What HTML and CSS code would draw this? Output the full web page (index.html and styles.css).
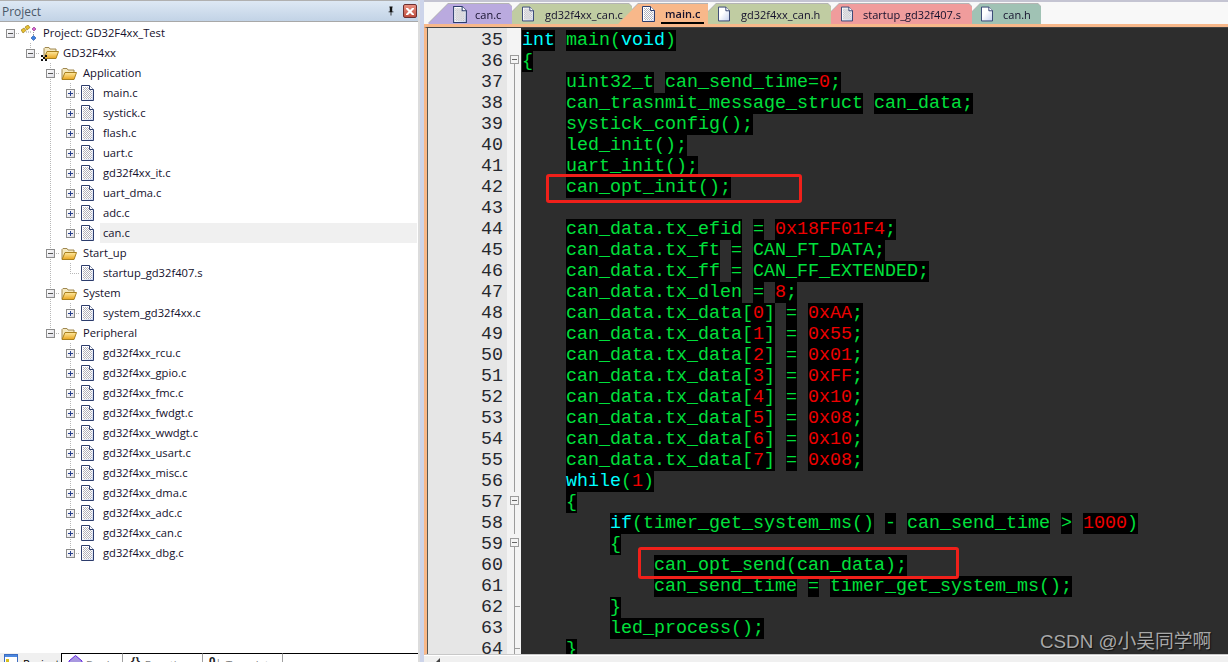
FILE: index.html
```html
<!DOCTYPE html>
<html lang="zh-CN">

<head>
    <meta charset="UTF-8">
    <title>GD32F4xx_Test</title>
    <link rel="stylesheet" href="styles.css">
</head>

<body>
    <svg class="defs" width="0" height="0">
        <defs>
            <pattern id="hatch" width="2" height="2" patternUnits="userSpaceOnUse">
                <rect width="2" height="2" fill="#fff"/>
                <rect width="1" height="1" fill="#b4b4bc"/>
                <rect x="1" y="1" width="1" height="1" fill="#b4b4bc"/>
            </pattern>
            <linearGradient id="page" x1="0" x2="1" y1="0" y2="1">
                <stop offset="0.4" stop-color="#fff"/>
                <stop offset="1" stop-color="#c4d0ee"/>
            </linearGradient>
            <linearGradient id="gold" x1="0" x2="0" y1="0" y2="1">
                <stop offset="0" stop-color="#ffe9a0"/>
                <stop offset="1" stop-color="#e8a520"/>
            </linearGradient>
            <symbol id="file-c" viewBox="0 0 13 16">
                <path d="M.5.5H8.5L12.5 4.5V15.5H.5Z" fill="url(#page)" stroke="#2c3c6c"/>
                <path d="M2 2H8V5H11V14H2Z" fill="url(#hatch)"/>
                <path d="M8.5.5V4.5H12.5" fill="#fff" stroke="#2c3c6c"/>
            </symbol>
            <symbol id="file-h" viewBox="0 0 13 16">
                <path d="M.5.5H8.5L12.5 4.5V15.5H.5Z" fill="url(#page)" stroke="#2c3c6c"/>
                <path d="M8.5.5V4.5H12.5" fill="#fff" stroke="#2c3c6c"/>
            </symbol>
            <symbol id="folder" viewBox="0 0 16 13">
                <path d="M1 12V2.5L2 1.500H6L7 3H13V6" fill="#f4e8c0" stroke="#a08850"/>
                <path d="M1 12.500L4 5.500H15.500L13 12.500Z" fill="url(#gold)" stroke="#a88020"/>
            </symbol>
            <symbol id="target" viewBox="0 0 18 16">
                <path d="M3 12V3.500L4 2.500H8L9 4H15V7" fill="#f4e8c0" stroke="#a08850"/>
                <path d="M3 13.500L6 6.500H17.500L15 13.500Z" fill="url(#gold)" stroke="#a88020"/>
                <path d="M0 10h2v2H0zM4 10h2v2H4zM2 12h2v2H2zM0 14h2v2H0zM4 14h2v2H4z" fill="#111"/>
            </symbol>
            <symbol id="project" viewBox="0 0 16 16">
                <path d="M4 2 7 0 9 2.500 6 5Z" fill="#e8c030" stroke="#907010" stroke-width=".6"/>
                <path d="M0 5 3 3 5 5.500 2 8Z" fill="#e8c030" stroke="#907010" stroke-width=".6"/>
                <path d="M11 4 13 2 15 4 13 6Z" fill="#d860d0" stroke="#803080" stroke-width=".6"/>
                <path d="M10 13 12.500 10.500 15 13 12.500 15.500Z" fill="#3c80e0" stroke="#20509a" stroke-width=".6"/>
                <path d="M5 7H11M12.500 7V10" stroke="#999" stroke-dasharray="1 1" fill="none"/>
            </symbol>
        </defs>
    </svg>

    <div class="ide">
        <aside class="side">
            <div class="side-head">
                <span class="side-title">Project</span>
                <svg class="pin" viewBox="0 0 10 11" width="8" height="10"><path d="M3 0H7V1H6.500V6H8V7H5.500V11H4.500V7H2V6H3.500V1H3Z" fill="#111"/></svg>
                <span class="close">
                    <svg viewBox="0 0 8 7" width="8" height="7"><path d="M0 0H2L4 2 6 0H8V1L5.500 3.500 8 6V7H6L4 5 2 7H0V6L2.500 3.500 0 1Z" fill="#fff"/></svg>
                </span>
            </div>

            <div class="tree">
                <div class="row"><span class="tg first"><i class="minus"></i></span><span class="ico"><svg width="16" height="16"><use href="#project"/></svg></span><span class="lbl">Project: GD32F4xx_Test</span></div>
                <div class="row"><span class="sp"></span><span class="tg last"><i class="minus"></i></span><span class="ico"><svg width="18" height="16"><use href="#target"/></svg></span><span class="lbl">GD32F4xx</span></div>

                <!-- Application -->
                <div class="row"><span class="sp"></span><span class="sp"></span><span class="tg"><i class="minus"></i></span><span class="ico"><svg width="16" height="13"><use href="#folder"/></svg></span><span class="lbl">Application</span></div>
                <div class="row"><span class="sp"></span><span class="sp"></span><span class="gd"></span><span class="tg"><i class="plus"></i></span><span class="ico"><svg width="13" height="16"><use href="#file-c"/></svg></span><span class="lbl">main.c</span></div>
                <div class="row"><span class="sp"></span><span class="sp"></span><span class="gd"></span><span class="tg"><i class="plus"></i></span><span class="ico"><svg width="13" height="16"><use href="#file-c"/></svg></span><span class="lbl">systick.c</span></div>
                <div class="row"><span class="sp"></span><span class="sp"></span><span class="gd"></span><span class="tg"><i class="plus"></i></span><span class="ico"><svg width="13" height="16"><use href="#file-c"/></svg></span><span class="lbl">flash.c</span></div>
                <div class="row"><span class="sp"></span><span class="sp"></span><span class="gd"></span><span class="tg"><i class="plus"></i></span><span class="ico"><svg width="13" height="16"><use href="#file-c"/></svg></span><span class="lbl">uart.c</span></div>
                <div class="row"><span class="sp"></span><span class="sp"></span><span class="gd"></span><span class="tg"><i class="plus"></i></span><span class="ico"><svg width="13" height="16"><use href="#file-c"/></svg></span><span class="lbl">gd32f4xx_it.c</span></div>
                <div class="row"><span class="sp"></span><span class="sp"></span><span class="gd"></span><span class="tg"><i class="plus"></i></span><span class="ico"><svg width="13" height="16"><use href="#file-c"/></svg></span><span class="lbl">uart_dma.c</span></div>
                <div class="row"><span class="sp"></span><span class="sp"></span><span class="gd"></span><span class="tg"><i class="plus"></i></span><span class="ico"><svg width="13" height="16"><use href="#file-c"/></svg></span><span class="lbl">adc.c</span></div>
                <div class="row"><span class="sp"></span><span class="sp"></span><span class="gd"></span><span class="tg last"><i class="plus"></i></span><span class="ico"><svg width="13" height="16"><use href="#file-c"/></svg></span><span class="lbl sel">can.c</span></div>

                <!-- Start_up -->
                <div class="row"><span class="sp"></span><span class="sp"></span><span class="tg"><i class="minus"></i></span><span class="ico"><svg width="16" height="13"><use href="#folder"/></svg></span><span class="lbl">Start_up</span></div>
                <div class="row"><span class="sp"></span><span class="sp"></span><span class="gd"></span><span class="tg last"></span><span class="ico"><svg width="13" height="16"><use href="#file-c"/></svg></span><span class="lbl">startup_gd32f407.s</span></div>

                <!-- System -->
                <div class="row"><span class="sp"></span><span class="sp"></span><span class="tg"><i class="minus"></i></span><span class="ico"><svg width="16" height="13"><use href="#folder"/></svg></span><span class="lbl">System</span></div>
                <div class="row"><span class="sp"></span><span class="sp"></span><span class="gd"></span><span class="tg last"><i class="plus"></i></span><span class="ico"><svg width="13" height="16"><use href="#file-c"/></svg></span><span class="lbl">system_gd32f4xx.c</span></div>

                <!-- Peripheral -->
                <div class="row"><span class="sp"></span><span class="sp"></span><span class="tg last"><i class="minus"></i></span><span class="ico"><svg width="16" height="13"><use href="#folder"/></svg></span><span class="lbl">Peripheral</span></div>
                <div class="row"><span class="sp"></span><span class="sp"></span><span class="sp"></span><span class="tg"><i class="plus"></i></span><span class="ico"><svg width="13" height="16"><use href="#file-c"/></svg></span><span class="lbl">gd32f4xx_rcu.c</span></div>
                <div class="row"><span class="sp"></span><span class="sp"></span><span class="sp"></span><span class="tg"><i class="plus"></i></span><span class="ico"><svg width="13" height="16"><use href="#file-c"/></svg></span><span class="lbl">gd32f4xx_gpio.c</span></div>
                <div class="row"><span class="sp"></span><span class="sp"></span><span class="sp"></span><span class="tg"><i class="plus"></i></span><span class="ico"><svg width="13" height="16"><use href="#file-c"/></svg></span><span class="lbl">gd32f4xx_fmc.c</span></div>
                <div class="row"><span class="sp"></span><span class="sp"></span><span class="sp"></span><span class="tg"><i class="plus"></i></span><span class="ico"><svg width="13" height="16"><use href="#file-c"/></svg></span><span class="lbl">gd32f4xx_fwdgt.c</span></div>
                <div class="row"><span class="sp"></span><span class="sp"></span><span class="sp"></span><span class="tg"><i class="plus"></i></span><span class="ico"><svg width="13" height="16"><use href="#file-c"/></svg></span><span class="lbl">gd32f4xx_wwdgt.c</span></div>
                <div class="row"><span class="sp"></span><span class="sp"></span><span class="sp"></span><span class="tg"><i class="plus"></i></span><span class="ico"><svg width="13" height="16"><use href="#file-c"/></svg></span><span class="lbl">gd32f4xx_usart.c</span></div>
                <div class="row"><span class="sp"></span><span class="sp"></span><span class="sp"></span><span class="tg"><i class="plus"></i></span><span class="ico"><svg width="13" height="16"><use href="#file-c"/></svg></span><span class="lbl">gd32f4xx_misc.c</span></div>
                <div class="row"><span class="sp"></span><span class="sp"></span><span class="sp"></span><span class="tg"><i class="plus"></i></span><span class="ico"><svg width="13" height="16"><use href="#file-c"/></svg></span><span class="lbl">gd32f4xx_dma.c</span></div>
                <div class="row"><span class="sp"></span><span class="sp"></span><span class="sp"></span><span class="tg"><i class="plus"></i></span><span class="ico"><svg width="13" height="16"><use href="#file-c"/></svg></span><span class="lbl">gd32f4xx_adc.c</span></div>
                <div class="row"><span class="sp"></span><span class="sp"></span><span class="sp"></span><span class="tg"><i class="plus"></i></span><span class="ico"><svg width="13" height="16"><use href="#file-c"/></svg></span><span class="lbl">gd32f4xx_can.c</span></div>
                <div class="row"><span class="sp"></span><span class="sp"></span><span class="sp"></span><span class="tg last"><i class="plus"></i></span><span class="ico"><svg width="13" height="16"><use href="#file-c"/></svg></span><span class="lbl">gd32f4xx_dbg.c</span></div>
            </div>

            <!-- 底部頁籤 -->
            <div class="side-tabs">
                <span class="stab stab-on">
                    <svg width="14" height="12" viewBox="0 0 14 12"><rect x=".5" y=".5" width="13" height="11" fill="#fff" stroke="#3c6cc0"/><rect x="1" y="1" width="12" height="2" fill="#4c88e0"/><rect x="2" y="5" width="3" height="3" fill="#d8c020"/></svg>
                    <span class="stab-text">Project</span>
                </span>
                <span class="stab stab-books">
                    <svg width="15" height="12" viewBox="0 0 15 12"><path d="M1 6 7.500 .5 14 6V12H1Z" fill="#a898e0" stroke="#6020e0"/></svg>
                    <span class="stab-text">Books</span>
                </span>
                <span class="stab stab-func"><b>{}</b><span class="stab-text">Functions</span></span>
                <span class="stab stab-tpl"><b>0↓</b><span class="stab-text">Templates</span></span>
                <span class="stab-rest"></span>
            </div>
        </aside>

        <div class="split"></div>

        <main class="main">
            <div class="tabbar">
                <div class="tabs">
                    <div class="tab tab-first c-purple"><svg width="14" height="17"><use href="#file-c"/></svg><span>can.c</span></div>
                    <div class="tab tab-cfile c-olive"><svg width="12" height="16"><use href="#file-c"/></svg><span>gd32f4xx_can.c</span></div>
                    <div class="tab tab-active c-orange"><svg width="13" height="16"><use href="#file-c"/></svg><span>main.c</span></div>
                    <div class="tab tab-hfile c-olive"><svg width="12" height="16"><use href="#file-h"/></svg><span>gd32f4xx_can.h</span></div>
                    <div class="tab tab-startup c-pink"><svg width="12" height="16"><use href="#file-c"/></svg><span>startup_gd32f407.s</span></div>
                    <div class="tab tab-last c-teal"><svg width="12" height="16"><use href="#file-h"/></svg><span>can.h</span></div>
                </div>
            </div>

            <div class="editor">
                <div class="line"><span class="num">35</span><span class="fold"></span><pre><b class="k">int</b> <b>main(</b><b class="k">void</b><b>)</b></pre></div>
                <div class="line"><span class="num">36</span><span class="fold fb"></span><pre><b>{</b></pre></div>
                <div class="line"><span class="num">37</span><span class="fold fl"></span><pre>    <b>uint32_t</b> <b>can_send_time=</b><b class="r">0</b><b>;</b></pre></div>
                <div class="line"><span class="num">38</span><span class="fold fl"></span><pre>    <b>can_trasnmit_message_struct</b> <b>can_data;</b></pre></div>
                <div class="line"><span class="num">39</span><span class="fold fl"></span><pre>    <b>systick_config();</b></pre></div>
                <div class="line"><span class="num">40</span><span class="fold fl"></span><pre>    <b>led_init();</b></pre></div>
                <div class="line"><span class="num">41</span><span class="fold fl"></span><pre>    <b>uart_init();</b></pre></div>
                <div class="line"><span class="num">42</span><span class="fold fl"></span><pre>    <b>can_opt_init();</b></pre></div>
                <div class="line"><span class="num">43</span><span class="fold fl"></span><pre> </pre></div>
                <div class="line"><span class="num">44</span><span class="fold fl"></span><pre>    <b>can_data.tx_efid</b> <b>=</b> <b class="r">0x18FF01F4</b><b>;</b></pre></div>
                <div class="line"><span class="num">45</span><span class="fold fl"></span><pre>    <b>can_data.tx_ft</b> <b>=</b> <b>CAN_FT_DATA;</b></pre></div>
                <div class="line"><span class="num">46</span><span class="fold fl"></span><pre>    <b>can_data.tx_ff</b> <b>=</b> <b>CAN_FF_EXTENDED;</b></pre></div>
                <div class="line"><span class="num">47</span><span class="fold fl"></span><pre>    <b>can_data.tx_dlen</b> <b>=</b> <b class="r">8</b><b>;</b></pre></div>
                <div class="line"><span class="num">48</span><span class="fold fl"></span><pre>    <b>can_data.tx_data[</b><b class="r">0</b><b>]</b> <b>=</b> <b class="r">0xAA</b><b>;</b></pre></div>
                <div class="line"><span class="num">49</span><span class="fold fl"></span><pre>    <b>can_data.tx_data[</b><b class="r">1</b><b>]</b> <b>=</b> <b class="r">0x55</b><b>;</b></pre></div>
                <div class="line"><span class="num">50</span><span class="fold fl"></span><pre>    <b>can_data.tx_data[</b><b class="r">2</b><b>]</b> <b>=</b> <b class="r">0x01</b><b>;</b></pre></div>
                <div class="line"><span class="num">51</span><span class="fold fl"></span><pre>    <b>can_data.tx_data[</b><b class="r">3</b><b>]</b> <b>=</b> <b class="r">0xFF</b><b>;</b></pre></div>
                <div class="line"><span class="num">52</span><span class="fold fl"></span><pre>    <b>can_data.tx_data[</b><b class="r">4</b><b>]</b> <b>=</b> <b class="r">0x10</b><b>;</b></pre></div>
                <div class="line"><span class="num">53</span><span class="fold fl"></span><pre>    <b>can_data.tx_data[</b><b class="r">5</b><b>]</b> <b>=</b> <b class="r">0x08</b><b>;</b></pre></div>
                <div class="line"><span class="num">54</span><span class="fold fl"></span><pre>    <b>can_data.tx_data[</b><b class="r">6</b><b>]</b> <b>=</b> <b class="r">0x10</b><b>;</b></pre></div>
                <div class="line"><span class="num">55</span><span class="fold fl"></span><pre>    <b>can_data.tx_data[</b><b class="r">7</b><b>]</b> <b>=</b> <b class="r">0x08</b><b>;</b></pre></div>
                <div class="line"><span class="num">56</span><span class="fold fl"></span><pre>    <b class="k">while</b><b>(</b><b class="r">1</b><b>)</b></pre></div>
                <div class="line"><span class="num">57</span><span class="fold fb"></span><pre>    <b>{</b></pre></div>
                <div class="line"><span class="num">58</span><span class="fold fl"></span><pre>        <b class="k">if</b><b>(timer_get_system_ms()</b> <b>-</b> <b>can_send_time</b> <b>&gt;</b> <b class="r">1000</b><b>)</b></pre></div>
                <div class="line"><span class="num">59</span><span class="fold fb"></span><pre>        <b>{</b></pre></div>
                <div class="line"><span class="num">60</span><span class="fold fl"></span><pre>            <b>can_opt_send(can_data);</b></pre></div>
                <div class="line"><span class="num">61</span><span class="fold fl"></span><pre>            <b>can_send_time</b> <b>=</b> <b>timer_get_system_ms();</b></pre></div>
                <div class="line"><span class="num">62</span><span class="fold fl ft"></span><pre>        <b>}</b></pre></div>
                <div class="line"><span class="num">63</span><span class="fold fl"></span><pre>        <b>led_process();</b></pre></div>
                <div class="line"><span class="num">64</span><span class="fold fl ft"></span><pre>    <b>}</b></pre></div>
            </div>

            <div class="hscroll"><span class="arrow-left"></span></div>
        </main>

        <!-- 紅框標記 -->
        <div class="mark mark-init"></div>
        <div class="mark mark-send"></div>
        <div class="watermark">CSDN @小吴同学啊</div>
    </div>
</body>

</html>
```

FILE: styles.css
```css
/* 主要樣式設定區塊 */
body {
    margin: 0;
    overflow: hidden;
    background-color: #f0f0f0;
}

.defs {
    position: absolute;
}

.ide {
    position: relative;
    display: flex;
    height: 662px;
    overflow: hidden;
    font-family: "Open Sans", "Liberation Sans", sans-serif;
    font-size: 11.2px;
    color: #14102c;
}

/* 左側專案面板 */
.side {
    display: flex;
    flex-direction: column;
    width: 418px;
    border-right: 2px solid #dcdcdc;
    background-color: #fff;
}

.side-head {
    display: flex;
    align-items: center;
    height: 20px;
    padding: 0 1px 0 2px;
    border-top: 1px solid #b0b0b0;
    border-bottom: 1px solid #a8a8a8;
    background: linear-gradient(#dde8f4, #c2d3e6);
}

.side-title {
    flex: 1;
    color: #4a5868;
    font-size: 12px;
}

.pin {
    margin-right: 8px;
}

.close {
    display: flex;
    align-items: center;
    justify-content: center;
    width: 12px;
    height: 12px;
    border: 1px solid #6c3030;
    border-radius: 2px;
    background: linear-gradient(#e89080, #c05040);
}

.tree {
    flex: 1;
    padding-top: 1px;
    overflow: hidden;
}

.row {
    display: flex;
    align-items: center;
    height: 20px;
}

.sp,
.gd,
.tg {
    flex: none;
    width: 20px;
    height: 20px;
}

.gd {
    background: repeating-linear-gradient(#b8b8b8 0 1px, transparent 1px 2px) 10px 0 / 1px 100% no-repeat;
}

.tg {
    display: flex;
    align-items: center;
    justify-content: center;
    background:
        repeating-linear-gradient(#b8b8b8 0 1px, transparent 1px 2px) 10px 0 / 1px 100% no-repeat,
        repeating-linear-gradient(90deg, #b8b8b8 0 1px, transparent 1px 2px) 10px 10px / 10px 1px no-repeat;
}

.tg.last {
    background:
        repeating-linear-gradient(#b8b8b8 0 1px, transparent 1px 2px) 10px 0 / 1px 10px no-repeat,
        repeating-linear-gradient(90deg, #b8b8b8 0 1px, transparent 1px 2px) 10px 10px / 10px 1px no-repeat;
}

.tg.first {
    background: repeating-linear-gradient(90deg, #b8b8b8 0 1px, transparent 1px 2px) 10px 10px / 10px 1px no-repeat;
}

.plus,
.minus {
    position: relative;
    width: 7px;
    height: 7px;
    margin-left: 1px;
    border: 1px solid #8c8c8c;
    background: linear-gradient(135deg, #fff, #dcdce4);
}

.plus::before,
.minus::before {
    content: "";
    position: absolute;
    left: 1px;
    top: 3px;
    width: 5px;
    height: 1px;
    background-color: #28408c;
}

.minus::before {
    background-color: #555;
}

.plus::after {
    content: "";
    position: absolute;
    left: 3px;
    top: 1px;
    width: 1px;
    height: 5px;
    background-color: #28408c;
}

.ico {
    flex: none;
    display: flex;
    align-items: center;
    width: 20px;
    height: 20px;
    padding-left: 1px;
    box-sizing: border-box;
    background-color: #fff;
}

.lbl {
    flex: 1;
    height: 20px;
    padding-left: 3px;
    line-height: 20px;
    white-space: nowrap;
}

.sel {
    margin-right: 1px;
    background-color: #f0f0f0;
}

.side-tabs {
    display: flex;
    height: 9px;
    overflow: hidden;
    color: #7c7c7c;
}

.stab {
    display: flex;
    align-items: flex-start;
    gap: 5px;
    box-sizing: border-box;
    height: 9px;
    padding-top: 1px;
    border-top: 1px solid #000;
    line-height: 12px;
}

.stab-text {
    margin-top: 4px;
}

.stab b {
    color: #222;
    font-weight: 700;
}

.stab-on {
    width: 62px;
    padding: 1px 0 0 4px;
    border-top: 0;
    border-right: 1px solid #000;
    background-color: #f0f0f0;
    color: #000;
}

.stab-books {
    width: 61px;
    padding-left: 6px;
    gap: 3px;
    border-right: 1px solid #a0a0a0;
}

.stab-func {
    width: 80px;
    padding-left: 8px;
    border-right: 1px solid #a0a0a0;
}

.stab-tpl {
    width: 80px;
    padding-left: 6px;
    border-right: 1px solid #a0a0a0;
}

.stab-rest {
    flex: 1;
    border-top: 1px solid #000;
}

.split {
    flex: none;
    width: 4px;
    background-color: #cdd4ea;
}

/* 右側編輯區 */
.main {
    flex: 1;
    display: flex;
    flex-direction: column;
    min-width: 0;
}

.tabbar {
    box-sizing: border-box;
    height: 27px;
    padding: 2px 0 0 4px;
    border-top: 2px solid #c4c4d2;
    border-bottom: 3px solid #f8b88a;
    background-color: #f8f8f8;
}

.tabs {
    display: flex;
    height: 20px;
    filter: drop-shadow(0 -1px 0 #b4b4b4);
}

.tab {
    flex: none;
    display: flex;
    align-items: center;
    gap: 10px;
    box-sizing: border-box;
    height: 20px;
    padding-left: 10px;
    clip-path: polygon(8px 0, calc(100% - 3px) 0, 100% 3px, 100% 100%, 0 100%, 0 8px);
    font-size: 11px;
    white-space: nowrap;
}

.tab svg {
    flex: none;
}

.tab-first {
    width: 84px;
    padding-left: 25px;
    gap: 8px;
    clip-path: polygon(20px 0, calc(100% - 3px) 0, 100% 3px, 100% 100%, 0 100%);
}

.tab-cfile {
    width: 120px;
    gap: 11px;
}

.tab-active {
    width: 90px;
    margin-left: -14px;
    padding-left: 24px;
    clip-path: polygon(20px 0, 100% 0, 100% 100%, 0 100%);
    font-weight: 600;
}

.tab-active span {
    margin: 2px -4px 0;
    padding: 0 4px;
    border-bottom: 2px solid #000;
    line-height: 16px;
}

.tab-hfile {
    width: 123px;
    gap: 11px;
}

.tab-startup {
    width: 141px;
}

.tab-last {
    width: 69px;
    padding-left: 9px;
}

.c-purple {
    background-color: #baaadf;
}

.c-olive {
    background-color: #c0cca2;
}

.c-orange {
    background-color: #f8b88a;
}

.c-pink {
    background-color: #f09c9c;
}

.c-teal {
    background-color: #a0c2b4;
}

.editor {
    flex: none;
    box-sizing: border-box;
    height: 628px;
    padding-top: 2px;
    overflow: hidden;
    border-top: 1px solid #444;
    border-bottom: 1px solid #c8c8c8;
    border-left: 3px solid #f8b88a;
    background-color: #2d2d2d;
    background-image: linear-gradient(90deg, #555 1px, #e6e6e6 1px, #e6e6e6 80px, #f4f4f4 80px, #f4f4f4 94px, transparent 94px);
}

.line {
    display: flex;
    height: 21px;
    padding-left: 1px;
    font-family: "Liberation Mono", monospace;
    font-size: 18.33px;
    line-height: 21px;
}

.num {
    flex: none;
    box-sizing: border-box;
    width: 79px;
    padding-right: 4px;
    color: #26282e;
    text-align: right;
}

.fold {
    position: relative;
    flex: none;
    width: 14px;
}

.fl::before,
.fb::before {
    content: "";
    position: absolute;
    left: 7px;
    top: 0;
    width: 1px;
    height: 21px;
    background-color: #9c9c9c;
}

.fb::before {
    top: 13px;
    height: 8px;
}

.fb::after {
    content: "";
    position: absolute;
    left: 3px;
    top: 4px;
    width: 7px;
    height: 7px;
    border: 1px solid #9c9c9c;
    background: #f4f4f4 linear-gradient(#666, #666) center / 5px 1px no-repeat;
}

.ft::after {
    content: "";
    position: absolute;
    left: 7px;
    top: 9px;
    width: 6px;
    height: 1px;
    background-color: #9c9c9c;
}

pre {
    margin: 0;
    padding-left: 1px;
    font: inherit;
    white-space: pre;
}

pre b {
    display: inline-block;
    height: 21px;
    background-color: #000;
    color: #00e03c;
    font-weight: 400;
    vertical-align: top;
}

pre b.k {
    color: #00ffff;
}

pre b.r {
    color: #ee0000;
}

.hscroll {
    flex: 1;
    border-top: 1px solid #fff;
    background-color: #f0f0f0;
}

.arrow-left {
    display: block;
    width: 0;
    height: 0;
    margin: 2px 0 0 12px;
    border-top: 4px solid transparent;
    border-bottom: 4px solid transparent;
    border-right: 4px solid #444;
}

/* 紅框與浮水印 */
.mark {
    position: absolute;
    box-sizing: border-box;
    border: 3px solid #f0201a;
    border-radius: 3px;
}

.mark-init {
    left: 546px;
    top: 174px;
    width: 256px;
    height: 29px;
}

.mark-send {
    left: 638px;
    top: 547px;
    width: 321px;
    height: 32px;
}

.watermark {
    position: absolute;
    left: 1040px;
    top: 630px;
    color: #a8a8a8;
    font-family: "Liberation Sans", "Noto Sans CJK SC", sans-serif;
    font-size: 18.8px;
    line-height: 24px;
    text-shadow: 1px 1px 1px #111;
    white-space: nowrap;
}
```
